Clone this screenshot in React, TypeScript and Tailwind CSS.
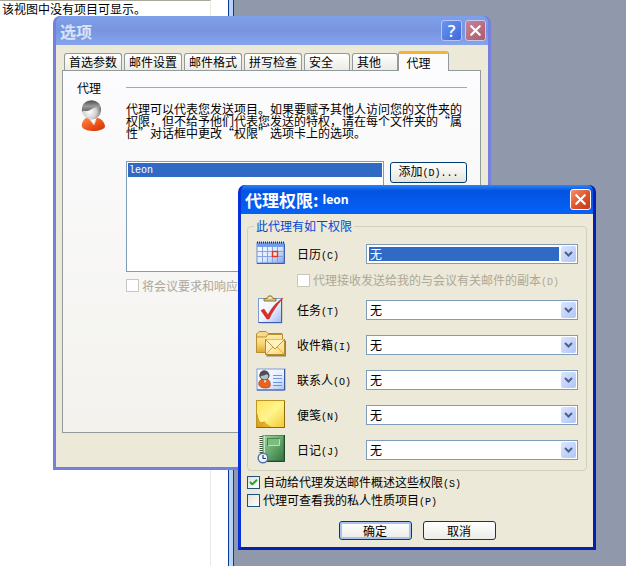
import type { ReactNode } from 'react'
import { Check, X } from 'lucide-react'

const tabs = ['首选参数', '邮件设置', '邮件格式', '拼写检查', '安全', '其他']

function Key({ children }: { children: ReactNode }) {
  return <span className="font-['Liberation_Mono',monospace] text-[10px]">{children}</span>
}

function PersonIcon() {
  return (
    <svg width="32" height="34" viewBox="0 0 32 34" aria-hidden="true">
      <defs>
        <linearGradient id="shirt" x1="0" y1="0" x2="1" y2="1">
          <stop offset="0" stopColor="#ff8a4c" />
          <stop offset="0.6" stopColor="#ea4c14" />
          <stop offset="1" stopColor="#c93208" />
        </linearGradient>
        <radialGradient id="face" cx="0.4" cy="0.6" r="0.6">
          <stop offset="0" stopColor="#ffffff" />
          <stop offset="0.6" stopColor="#d0d0d0" />
          <stop offset="1" stopColor="#777777" />
        </radialGradient>
        <linearGradient id="hair" x1="0" y1="0" x2="0" y2="1">
          <stop offset="0" stopColor="#4c4c4c" />
          <stop offset="0.5" stopColor="#9a9a9a" />
          <stop offset="1" stopColor="#5c5c5c" />
        </linearGradient>
      </defs>
      <path d="M9 19 C6 21 4 25 5 28 C7 31 12 32 17 32 C22 32 27 30 28 28 C28 24 25 20 21 19 Z" fill="url(#shirt)" />
      <path d="M12 19 L17 26 L20 18 Z" fill="#ffffff" />
      <path d="M12 20 L17 26 L19 21" fill="none" stroke="#d8b8a8" />
      <ellipse cx="14.500" cy="11" rx="9.500" ry="9.500" fill="url(#face)" />
      <path d="M5 13 C4 5 9 1 15 1.500 C21 2 25 6 24 13 C23.500 10 22 8 20 8 C16 8 13 12 10 12 C7 12 6 11 5 13 Z" fill="url(#hair)" />
    </svg>
  )
}

function CalendarIcon() {
  return (
    <svg width="30" height="30" viewBox="0 0 30 30" aria-hidden="true">
      <defs>
        <linearGradient id="calBody" x1="0" y1="0" x2="1" y2="1">
          <stop offset="0" stopColor="#ffffff" />
          <stop offset="0.55" stopColor="#dce9ff" />
          <stop offset="1" stopColor="#7fa2e8" />
        </linearGradient>
      </defs>
      <rect x="2" y="5" width="27" height="20" fill="#b9b8ae" />
      <rect x="1" y="4" width="27" height="20" fill="url(#calBody)" stroke="#6b8bd6" strokeWidth="1" />
      <rect x="1" y="4" width="27" height="4" fill="#6f9cf0" />
      <path d="M1 3.500H28" stroke="#26304e" strokeWidth="2" strokeDasharray="1 1" />
      <path d="M6.500 8V24M11.500 8V24M16.500 8V24M21.500 8V24M1 12.500H28M1 17.500H28" stroke="#86a4e2" />
      <path d="M1 24.500H28.500V5" fill="none" stroke="#3f5ea8" />
      <rect x="16.500" y="12.500" width="5" height="5" fill="#ffe4df" stroke="#e03420" strokeWidth="1.400" />
    </svg>
  )
}

function TaskIcon() {
  return (
    <svg width="30" height="30" viewBox="0 0 30 30" aria-hidden="true">
      <defs>
        <linearGradient id="taskPaper" x1="0" y1="0" x2="1" y2="1">
          <stop offset="0" stopColor="#ffffff" />
          <stop offset="0.5" stopColor="#eef4ff" />
          <stop offset="1" stopColor="#9fbcf3" />
        </linearGradient>
      </defs>
      <rect x="3.500" y="4.500" width="23" height="24" fill="#b5b3a8" />
      <rect x="2.500" y="3.500" width="23" height="24" fill="url(#taskPaper)" stroke="#7d9ad8" />
      <path d="M2.500 27.500H25.500V4" fill="none" stroke="#3d5fae" />
      <path d="M8 6 V3.500 H11 C11 0 17 0 17 3.500 H20 V6 Z" fill="#d8c47c" stroke="#8a7636" />
      <path d="M12 3.500 C12 1.500 16 1.500 16 3.500" fill="#f8f0cd" />
      <path d="M5 15.500 L8 14 L12 20 C16 12 21 7 27 3 C21 10 16 17 13 24 H11 Z" fill="#e02e24" stroke="#b01812" strokeWidth="0.500" />
    </svg>
  )
}

function InboxIcon() {
  return (
    <svg width="30" height="30" viewBox="0 0 30 30" aria-hidden="true">
      <defs>
        <linearGradient id="folder" x1="0" y1="0" x2="0" y2="1">
          <stop offset="0" stopColor="#ffeeae" />
          <stop offset="0.5" stopColor="#f9d673" />
          <stop offset="1" stopColor="#dca63a" />
        </linearGradient>
        <linearGradient id="letter" x1="0" y1="0" x2="1" y2="1">
          <stop offset="0" stopColor="#fffbe2" />
          <stop offset="1" stopColor="#ffd974" />
        </linearGradient>
      </defs>
      <path d="M0.500 22 V4 L3 1.500 H10 L12 3.500 H26 V22 Z" fill="#f7d98a" stroke="#b28b35" />
      <path d="M0.500 22.500 V7 H10 L12 4.500 H26.500 V22.500 Z" fill="url(#folder)" stroke="#b98f32" />
      <rect x="10.500" y="10.500" width="20" height="16" fill="#8b8366" />
      <rect x="9.500" y="9.500" width="19" height="15" fill="url(#letter)" stroke="#b8892c" />
      <path d="M9.500 24.500 L17 17 M28.500 24.500 L21 17" stroke="#d9a748" />
      <path d="M9.500 9.500 L19 19 L28.500 9.500" fill="#fff3bd" stroke="#c1933b" />
    </svg>
  )
}

function ContactIcon() {
  return (
    <svg width="30" height="30" viewBox="0 0 30 30" aria-hidden="true">
      <defs>
        <linearGradient id="card" x1="0" y1="0" x2="1" y2="1">
          <stop offset="0" stopColor="#ffffff" />
          <stop offset="0.6" stopColor="#e4edff" />
          <stop offset="1" stopColor="#a9c3f5" />
        </linearGradient>
      </defs>
      <rect x="1" y="4" width="28" height="21" fill="url(#card)" stroke="#7c9ddd" />
      <path d="M1 25 H28.500 V4" fill="none" stroke="#35589f" />
      <path d="M6 14 C2 16 2 20 4 21.500 C7 23.500 12 23.500 14 21.500 C15 19 14 15 11 14 Z" fill="#e8641e" stroke="#a83a0c" strokeWidth="0.600" />
      <path d="M7 14 L9 18 L11 14 Z" fill="#ffffff" />
      <circle cx="8.500" cy="10.500" r="4.500" fill="#b8c0c8" stroke="#44484e" />
      <path d="M3.500 12 C3 7 6 5 8.500 5.500 C12 5.500 14 9 13 12.500 C12 9 11 8.500 9 10 C7 11 5 10 3.500 12 Z" fill="#4a4d52" />
      <path d="M17 10.500H26M17 13.500H26M17 17.500H26M17 20.500H26" stroke="#6d95e2" />
    </svg>
  )
}

function NoteIcon() {
  return (
    <svg width="30" height="30" viewBox="0 0 30 30" aria-hidden="true">
      <defs>
        <linearGradient id="note" x1="0" y1="0" x2="1" y2="1">
          <stop offset="0" stopColor="#ffe45e" />
          <stop offset="0.5" stopColor="#fff58c" />
          <stop offset="1" stopColor="#f2c832" />
        </linearGradient>
        <linearGradient id="curl" x1="0" y1="1" x2="1" y2="0">
          <stop offset="0" stopColor="#d99c18" />
          <stop offset="0.6" stopColor="#eebb2a" />
          <stop offset="1" stopColor="#fff08a" />
        </linearGradient>
      </defs>
      <rect x="0.500" y="0.500" width="28" height="27" fill="url(#note)" stroke="#bd9428" />
      <path d="M1 14 C2 19 3 22 5 23 C9 20 10 24 16 27 H1 Z" fill="url(#curl)" />
      <path d="M1 14 C2 19 3 22 5 23 L9 22" fill="none" stroke="#c48d14" strokeWidth="0.800" />
      <path d="M0.500 27.500 H28.500 V1" fill="none" stroke="#8d6910" />
    </svg>
  )
}

function JournalIcon() {
  return (
    <svg width="30" height="30" viewBox="0 0 30 30" aria-hidden="true">
      <defs>
        <linearGradient id="book" x1="0" y1="0" x2="1" y2="1">
          <stop offset="0" stopColor="#a5d6a4" />
          <stop offset="0.5" stopColor="#67a96c" />
          <stop offset="1" stopColor="#2f7440" />
        </linearGradient>
      </defs>
      <rect x="6" y="0" width="22" height="26" fill="url(#book)" stroke="#2c6538" />
      <path d="M8.500 0.500V25" stroke="#c3e6bf" />
      <path d="M6 26.500H28.500V0" fill="none" stroke="#1f4b28" />
      <path d="M5 0V26" stroke="#ffffff" strokeWidth="3" strokeDasharray="1 1" />
      <path d="M5 1V26" stroke="#3f4a40" strokeWidth="3" strokeDasharray="1 1" />
      <rect x="11.500" y="3.500" width="12" height="7" fill="#7dbc7e" stroke="#428a4d" />
      <path d="M12 10.500H23.500V4" fill="none" stroke="#b9e0b5" />
      <circle cx="7" cy="23" r="4.800" fill="#f1f6ff" stroke="#5a73a6" strokeWidth="1.500" />
      <path d="M7 20V23.500H10" fill="none" stroke="#2a3d70" strokeWidth="1.200" />
    </svg>
  )
}

const folders = [
  { id: 'tasks', name: '任务', hotkey: '(T)', icon: <TaskIcon /> },
  { id: 'inbox', name: '收件箱', hotkey: '(I)', icon: <InboxIcon /> },
  { id: 'contacts', name: '联系人', hotkey: '(O)', icon: <ContactIcon /> },
  { id: 'notes', name: '便笺', hotkey: '(N)', icon: <NoteIcon /> },
  { id: 'journal', name: '日记', hotkey: '(J)', icon: <JournalIcon /> },
]

type CheckProps = {
  id: string
  checked?: boolean
  disabled?: boolean
  children: ReactNode
}

function CheckRow({ id, checked = false, disabled = false, children }: CheckProps) {
  return (
    <div className="flex h-[13px] items-center gap-[3px]">
      <span className="relative h-[13px] w-[13px] shrink-0">
        <input
          id={id}
          type="checkbox"
          defaultChecked={checked}
          disabled={disabled}
          className="peer block h-[13px] w-[13px] appearance-none border border-[#1c5180] bg-gradient-to-br from-[#e0e0da] to-white disabled:border-[#cac8bb] disabled:bg-white disabled:bg-none"
        />
        <Check
          size={9}
          strokeWidth={5}
          className="pointer-events-none absolute top-[2px] left-[2px] hidden text-[#21a121] peer-checked:block"
        />
      </span>
      <label htmlFor={id} className={disabled ? 'whitespace-nowrap text-[#aca899]' : 'whitespace-nowrap'}>
        {children}
      </label>
    </div>
  )
}

type FolderRowProps = {
  id: string
  name: string
  hotkey: string
  icon: ReactNode
  active?: boolean
}

function FolderRow({ id, name, hotkey, icon, active = false }: FolderRowProps) {
  return (
    <div className="grid h-[30px] grid-cols-[41px_69px_1fr] items-center">
      {icon}
      <label htmlFor={id}>
        {name}
        <Key>{hotkey}</Key>
      </label>
      <div className="flex h-5 gap-[2px] border border-[#7f9db9] bg-white p-[2px] pr-px">
        <select
          id={id}
          className={
            active
              ? 'min-w-0 flex-1 appearance-none bg-[#316ac5] pl-px leading-[14px] text-white outline-none'
              : 'min-w-0 flex-1 appearance-none bg-white pl-px leading-[14px] outline-none'
          }
        >
          <option>无</option>
        </select>
        <span className="-my-px flex w-[15px] items-center justify-center rounded-[2px] bg-gradient-to-br from-[#dbe5ff] to-[#afc5f7]">
          <svg width="9" height="6" viewBox="0 0 9 6" aria-hidden="true">
            <path d="M1 1L4.500 4.500L8 1" fill="none" stroke="#4d6185" strokeWidth="2" />
          </svg>
        </span>
      </div>
    </div>
  )
}

function OptionsDialog() {
  return (
    <section className="absolute top-4 left-[53px] w-[438px] rounded-t-[7px] border-x-[3px] border-b-[3px] border-[#7480dc] bg-[#7480dc]">
      <header className="flex h-[29px] items-center gap-[3px] rounded-t-[6px] bg-gradient-to-b from-[#7ea0ea] via-[#7994de] to-[#86a4ee] pr-[2px] pl-1">
        <h1 className="flex-1 text-[16px] font-bold text-[#d9e4f8]">选项</h1>
        <button
          type="button"
          aria-label="帮助"
          className="h-[21px] w-[21px] rounded-[3px] border border-[#b4c6f4] bg-gradient-to-br from-[#6c95ee] to-[#3c68dc] font-['Open_Sans',sans-serif] text-[17px] leading-[19px] font-semibold text-white"
        >
          ?
        </button>
        <button
          type="button"
          aria-label="关闭"
          className="flex h-[21px] w-[21px] items-center justify-center rounded-[3px] border border-[#c8c9e8] bg-gradient-to-br from-[#c58598] to-[#ad5a6c] text-white"
        >
          <X size={17} strokeWidth={3} />
        </button>
      </header>

      <div className="bg-[#ece9d8] pt-[6px] pr-[7px] pb-[34px] pl-[6px]">
        <nav className="flex h-[19px] items-end gap-[2px] pl-[2px]">
          {tabs.map((tab) => (
            <button
              key={tab}
              type="button"
              className="h-[17px] rounded-t-[3px] border border-b-0 border-[#919b9c] bg-gradient-to-b from-white to-[#ecebe5] px-1 leading-4 [&:nth-child(n+5)]:pr-4"
            >
              {tab}
            </button>
          ))}
          <button
            type="button"
            className="z-10 -mb-px -ml-[2px] h-5 w-[51px] rounded-t-[3px] border border-t-[3px] border-b-0 border-[#919b9c] border-t-[#f3b436] bg-[#fcfcfe] pr-[10px] leading-3"
          >
            代理
          </button>
        </nav>

        {/* Delegates page */}
        <div className="border border-[#919b9c] bg-gradient-to-b from-[#fcfcfe] to-[#f3f2ed] pt-[10px] pr-[13px] pb-[140px] pl-[14px]">
          <div className="grid grid-cols-[49px_1fr] leading-[14px]">
            <h2>代理</h2>
            <hr className="mt-[6px] border-[#aca899]" />
          </div>
          <div className="mt-1 grid grid-cols-[49px_1fr]">
            <PersonIcon />
            <p className="pt-1 leading-[12px] whitespace-nowrap">
              代理可以代表您发送项目。如果要赋予其他人访问您的文件夹的
              <br />
              权限，但不给予他们代表您发送的特权，请在每个文件夹的“属
              <br />
              性”对话框中更改“权限”选项卡上的选项。
            </p>
          </div>
          <div className="mt-[22px] ml-[49px] flex items-start gap-[6px]">
            <ul role="listbox" aria-label="代理" className="h-[111px] flex-1 border border-[#7f9db9] bg-white p-px">
              <li
                role="option"
                aria-selected="true"
                className="h-[14px] bg-[#316ac5] pl-px font-['Liberation_Mono',monospace] text-[10px] leading-4 text-white"
              >
                leon
              </li>
            </ul>
            <button
              type="button"
              className="mt-px h-[21px] w-[77px] rounded-[3px] border border-[#003c74] bg-gradient-to-b from-white to-[#e6e4da] leading-4"
            >
              添加<Key>(D)...</Key>
            </button>
          </div>
          <div className="mt-[7px] ml-[49px]">
            <CheckRow id="meeting" disabled>
              将会议要求和响应
            </CheckRow>
          </div>
        </div>
      </div>
    </section>
  )
}

function PermissionsDialog() {
  return (
    <section className="absolute top-[185px] left-[238px] z-20 w-[358px] rounded-t-[7px] border-x-[3px] border-b-[3px] border-[#0831d9] border-r-[#0320b0] border-b-[#0320b0] bg-[#0855dd]">
      <header className="flex h-[29px] items-center rounded-t-[6px] bg-gradient-to-b from-[#2a86fb] via-[#0453e0] via-20% to-[#0562f8] pr-[2px] pl-1 text-white">
        <h1 className="flex flex-1 items-center gap-1 text-[17px] font-bold">
          <span>代理权限:</span>
          <span className="font-['Open_Sans',sans-serif] text-[12px]">leon</span>
        </h1>
        <button
          type="button"
          aria-label="关闭"
          className="flex h-[21px] w-[21px] items-center justify-center rounded-[3px] border border-white bg-gradient-to-br from-[#f0916e] via-[#e2542c] to-[#c63a12]"
        >
          <X size={17} strokeWidth={3} />
        </button>
      </header>

      <div className="bg-[#ece9d8] px-[6px] pt-[5px] pb-[7px]">
        <fieldset className="rounded-[4px] border border-[#d0d0bf] px-2 pb-[5px]">
          <legend className="-ml-[2px] px-[2px] leading-[14px] text-[#0046d5]">此代理有如下权限</legend>
          <div className="flex flex-col gap-[5px] pt-[6px]">
            <FolderRow id="calendar" name="日历" hotkey="(C)" icon={<CalendarIcon />} active />
            <div className="h-4 pl-[41px]">
              <CheckRow id="copies" disabled>
                代理接收发送给我的与会议有关邮件的副本<Key>(D)</Key>
              </CheckRow>
            </div>
            {folders.map((folder) => (
              <FolderRow key={folder.id} {...folder} />
            ))}
          </div>
        </fieldset>

        <div className="mt-[5px] flex flex-col gap-[5px]">
          <CheckRow id="summary" checked>
            自动给代理发送邮件概述这些权限<Key>(S)</Key>
          </CheckRow>
          <CheckRow id="private">
            代理可查看我的私人性质项目<Key>(P)</Key>
          </CheckRow>
        </div>

        <div className="mt-[14px] flex justify-center gap-[11px]">
          <button
            type="button"
            className="h-[19px] w-[73px] rounded-[3px] border border-[#003c74] bg-gradient-to-b from-white to-[#ecebe6] leading-4 shadow-[inset_0_0_0_2px_#a9c3f0]"
          >
            确定
          </button>
          <button
            type="button"
            className="h-[19px] w-[73px] rounded-[3px] border border-[#003c74] bg-gradient-to-b from-white to-[#ecebe6] leading-4"
          >
            取消
          </button>
        </div>
      </div>
    </section>
  )
}

export default function App() {
  return (
    <main
      lang="zh-CN"
      className="relative flex h-screen overflow-hidden bg-[#9098ac] font-['Noto_Sans_CJK_SC',sans-serif] text-[12px] text-black"
    >
      <div className="flex w-[234px] border-r border-[#0a3a94] bg-white">
        <p className="flex-1 border-t border-r border-t-[#aca899] border-r-[#ece9e4] pl-[2px] leading-4">
          该视图中没有项目可显示。
        </p>
        <div className="w-[17px]" />
        <div className="w-[5px] border-l border-[#0a3a94] bg-[#b7d2fb]" />
      </div>
      <OptionsDialog />
      <PermissionsDialog />
    </main>
  )
}
